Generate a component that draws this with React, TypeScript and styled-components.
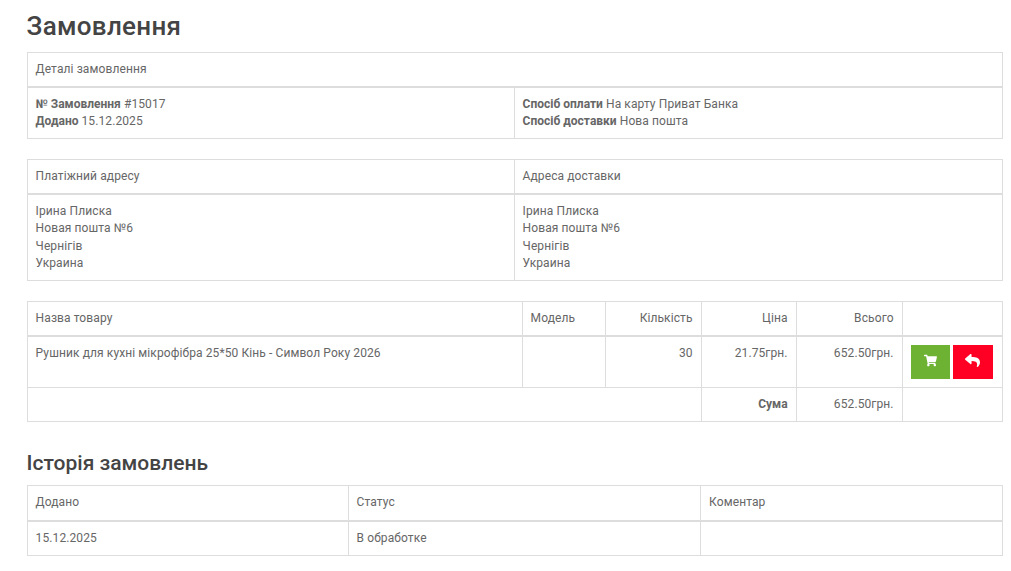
import React from 'react';
import styled, { createGlobalStyle } from 'styled-components';
import { FaReply, FaShoppingCart } from 'react-icons/fa';

const GlobalStyle = createGlobalStyle`
  html, body {
    margin: 0;
    padding: 0;
    background: #fff;
  }
  body {
    font-family: Roboto, sans-serif;
    font-size: 12px;
    line-height: 1.42857;
    color: #666;
  }
`;

const Page = styled.div`
  padding: 0 9px 0 26.6px;
`;

const Title = styled.h1`
  margin: 0;
  padding-top: 11px;
  height: 51.7px;
  box-sizing: border-box;
  font-size: 26px;
  letter-spacing: 0.3px;
  line-height: 30px;
  font-weight: 500;
  color: #444;
`;

const SubTitle = styled.h2`
  margin: 0;
  padding-top: 8.5px;
  height: 43.4px;
  box-sizing: border-box;
  font-size: 21px;
  line-height: 24px;
  font-weight: 500;
  color: #444;
`;

const Table = styled.table`
  width: 975px;
  table-layout: fixed;
  border-collapse: collapse;
  margin-bottom: 20px;
  font-size: 12px;
  line-height: 1.42857;
  letter-spacing: 0.1px;
  color: #666;

  td {
    border: 1px solid #ddd;
    padding: 8px;
    vertical-align: top;
  }
  thead td {
    border-bottom-width: 2px;
  }
  b {
    letter-spacing: 0;
  }
`;

const Col = styled.col<{ $w: number }>`
  width: ${(p) => p.$w}px;
`;

const Cell = styled.td<{ $right?: boolean }>`
  text-align: ${(p) => (p.$right ? 'right' : 'left')};
`;

const Line = styled.div``;

const ButtonRow = styled.div`
  display: flex;
  gap: 3px;
`;

const ActionButton = styled.button<{ $bg: string; $w: number }>`
  display: flex;
  align-items: center;
  justify-content: center;
  width: ${(p) => p.$w}px;
  height: 34px;
  padding: 0 0 3px;
  border: 0;
  background: ${(p) => p.$bg};
  color: #fff;
`;

const Address = ({ lines }: { lines: string[] }) => (
  <Cell>
    {lines.map((l) => (
      <Line key={l}>{l}</Line>
    ))}
  </Cell>
);

const addressLines = ['Ірина Плиска', 'Новая пошта №6', 'Чернігів', 'Украина'];

export default function App() {
  return (
    <Page>
      <GlobalStyle />
      <Title>Замовлення</Title>

      <Table>
        <colgroup>
          <Col $w={487} />
          <Col $w={488} />
        </colgroup>
        <thead>
          <tr>
            <Cell colSpan={2}>Деталі замовлення</Cell>
          </tr>
        </thead>
        <tbody>
          <tr>
            <Cell>
              <Line><b>№ Замовлення</b> #15017</Line>
              <Line><b>Додано</b> 15.12.2025</Line>
            </Cell>
            <Cell>
              <Line><b>Спосіб оплати</b> На карту Приват Банка</Line>
              <Line><b>Спосіб доставки</b> Нова пошта</Line>
            </Cell>
          </tr>
        </tbody>
      </Table>

      <Table>
        <colgroup>
          <Col $w={487} />
          <Col $w={488} />
        </colgroup>
        <thead>
          <tr>
            <Cell>Платіжний адресу</Cell>
            <Cell>Адреса доставки</Cell>
          </tr>
        </thead>
        <tbody>
          <tr>
            <Address lines={addressLines} />
            <Address lines={addressLines} />
          </tr>
        </tbody>
      </Table>

      <Table>
        <colgroup>
          <Col $w={495} />
          <Col $w={83} />
          <Col $w={96} />
          <Col $w={95} />
          <Col $w={106} />
          <Col $w={100} />
        </colgroup>
        <thead>
          <tr>
            <Cell>Назва товару</Cell>
            <Cell>Модель</Cell>
            <Cell $right>Кількість</Cell>
            <Cell $right>Ціна</Cell>
            <Cell $right>Всього</Cell>
            <Cell />
          </tr>
        </thead>
        <tbody>
          <tr>
            <Cell>Рушник для кухні мікрофібра 25*50 Кінь - Символ Року 2026</Cell>
            <Cell />
            <Cell $right>30</Cell>
            <Cell $right>21.75грн.</Cell>
            <Cell $right>652.50грн.</Cell>
            <Cell>
              <ButtonRow>
                <ActionButton $bg="#6eb234" $w={39}><FaShoppingCart size={13} /></ActionButton>
                <ActionButton $bg="#ff0024" $w={40}><FaReply size={15} /></ActionButton>
              </ButtonRow>
            </Cell>
          </tr>
          <tr>
            <Cell colSpan={3} />
            <Cell $right><b>Сума</b></Cell>
            <Cell $right>652.50грн.</Cell>
            <Cell />
          </tr>
        </tbody>
      </Table>

      <SubTitle>Історія замовлень</SubTitle>
      <Table>
        <colgroup>
          <Col $w={321} />
          <Col $w={352.5} />
          <Col $w={301.5} />
        </colgroup>
        <thead>
          <tr>
            <Cell>Додано</Cell>
            <Cell>Статус</Cell>
            <Cell>Коментар</Cell>
          </tr>
        </thead>
        <tbody>
          <tr>
            <Cell>15.12.2025</Cell>
            <Cell>В обработке</Cell>
            <Cell />
          </tr>
        </tbody>
      </Table>
    </Page>
  );
}
